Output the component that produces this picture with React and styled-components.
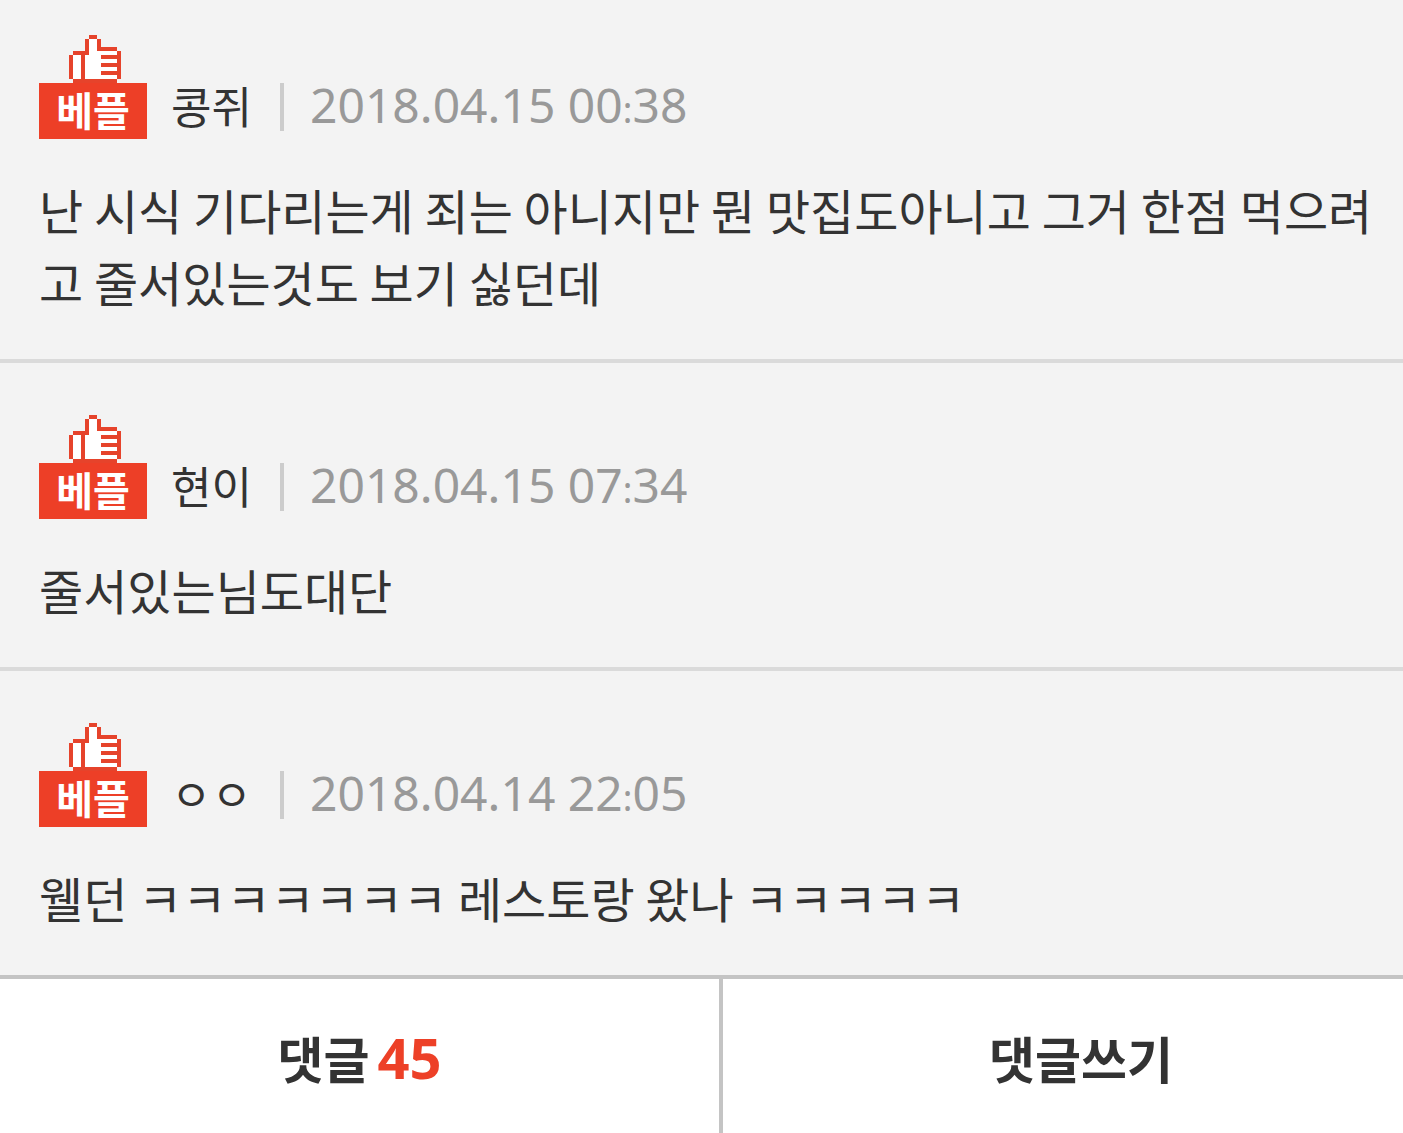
import React from "react";
import styled, { createGlobalStyle } from "styled-components";

const comments = [
  {
    id: 1,
    name: "콩쥐",
    day: "2018.04.15",
    hour: "00",
    minute: "38",
    text: "난 시식 기다리는게 죄는 아니지만 뭔 맛집도아니고 그거 한점 먹으려고 줄서있는것도 보기 싫던데",
  },
  {
    id: 2,
    name: "현이",
    day: "2018.04.15",
    hour: "07",
    minute: "34",
    text: "줄서있는님도대단",
  },
  {
    id: 3,
    name: "ㅇㅇ",
    day: "2018.04.14",
    hour: "22",
    minute: "05",
    text: "웰던 ㅋㅋㅋㅋㅋㅋㅋ 레스토랑 왔나 ㅋㅋㅋㅋㅋ",
  },
];

function BestBadge() {
  return (
    <BadgeIcon viewBox="0 0 108 104" role="img" aria-label="베플">
      <g transform="translate(-2 0) scale(4)" shapeRendering="crispEdges">
        <path fill="#fff" d="M13 1h2v3h5v7H9V5h4z" />
        <path
          fill="#e6432b"
          d="M13 0h2v1h-2zM12 1h1v4h-1zM15 1h1v3h-1zM16 3h4v1h-4zM9 4h4v1H9zM8 5h1v6H8zM11 5h1v6h-1zM20 4h1v7h-1zM16 5h4v1h-4zM16 7h4v1h-4zM16 9h4v1h-4zM9 11h11v1H9z"
        />
      </g>
      <rect y="48" width="108" height="56" fill="#ed3f27" />
      <text x="54" y="91" textAnchor="middle">
        베플
      </text>
    </BadgeIcon>
  );
}

function Comment({ comment }) {
  const { name, day, hour, minute, text } = comment;
  return (
    <CommentItem>
      <CommentHead>
        <BestBadge />
        <Name>{name}</Name>
        <PostDate>
          {day} {hour}
          <Colon>:</Colon>
          {minute}
        </PostDate>
      </CommentHead>
      <CommentText>{text}</CommentText>
    </CommentItem>
  );
}

function App() {
  return (
    <>
      <GlobalStyle />
      <CommentList>
        {comments.map((comment) => (
          <Comment key={comment.id} comment={comment} />
        ))}
      </CommentList>
      <BottomBar>
        <BarLink href="#comments">
          댓글 <Count>45</Count>
        </BarLink>
        <BarLink href="#write">댓글쓰기</BarLink>
      </BottomBar>
    </>
  );
}

const GlobalStyle = createGlobalStyle`
  * {
    box-sizing: border-box;
  }
  body {
    margin: 0;
    background: #fff;
    color: #333;
    font-family: "Noto Sans CJK KR", sans-serif;
  }
`;

const CommentList = styled.ul`
  margin: 0;
  padding: 0;
  list-style: none;
  background: #f3f3f3;
  border-bottom: 4px solid #c4c4c4;
`;

const CommentItem = styled.li`
  padding: 52px 24px 42px 39px;

  &:first-child {
    padding-top: 35px;
  }
  & + & {
    border-top: 4px solid #dadada;
  }
`;

const CommentHead = styled.div`
  display: flex;
  align-items: flex-end;
  height: 104px;
`;

const BadgeIcon = styled.svg`
  flex: none;
  width: 108px;
  height: 104px;
  margin-right: 24px;

  text {
    fill: #fff;
    font-size: 40px;
    font-weight: 700;
  }
`;

const Name = styled.strong`
  font-size: 44px;
  font-weight: 400;
  line-height: 68px;
`;

const PostDate = styled.time`
  height: 48px;
  margin: 0 0 8px 28px;
  padding-left: 26px;
  border-left: 4px solid #ccc;
  color: #999;
  font-family: "Noto Sans", sans-serif;
  font-size: 48px;
  line-height: 44px;
`;

const Colon = styled.span`
  font-size: 36px;
`;

const CommentText = styled.p`
  margin: 34px 0 0;
  font-size: 48px;
  line-height: 72px;
  word-break: break-all;
`;

const BottomBar = styled.nav`
  display: grid;
  grid-template-columns: 723fr 680fr;
`;

const BarLink = styled.a`
  display: flex;
  align-items: center;
  justify-content: center;
  gap: 8px;
  height: 154px;
  padding-top: 2px;
  color: #333;
  font-size: 50px;
  font-weight: 700;
  text-decoration: none;

  &:first-child {
    border-right: 4px solid #c4c4c4;
  }
  &:last-child {
    padding-left: 36px;
  }
`;

const Count = styled.span`
  color: #ed4027;
  font-family: "Noto Sans", sans-serif;
  font-size: 56px;
`;

export default App;
